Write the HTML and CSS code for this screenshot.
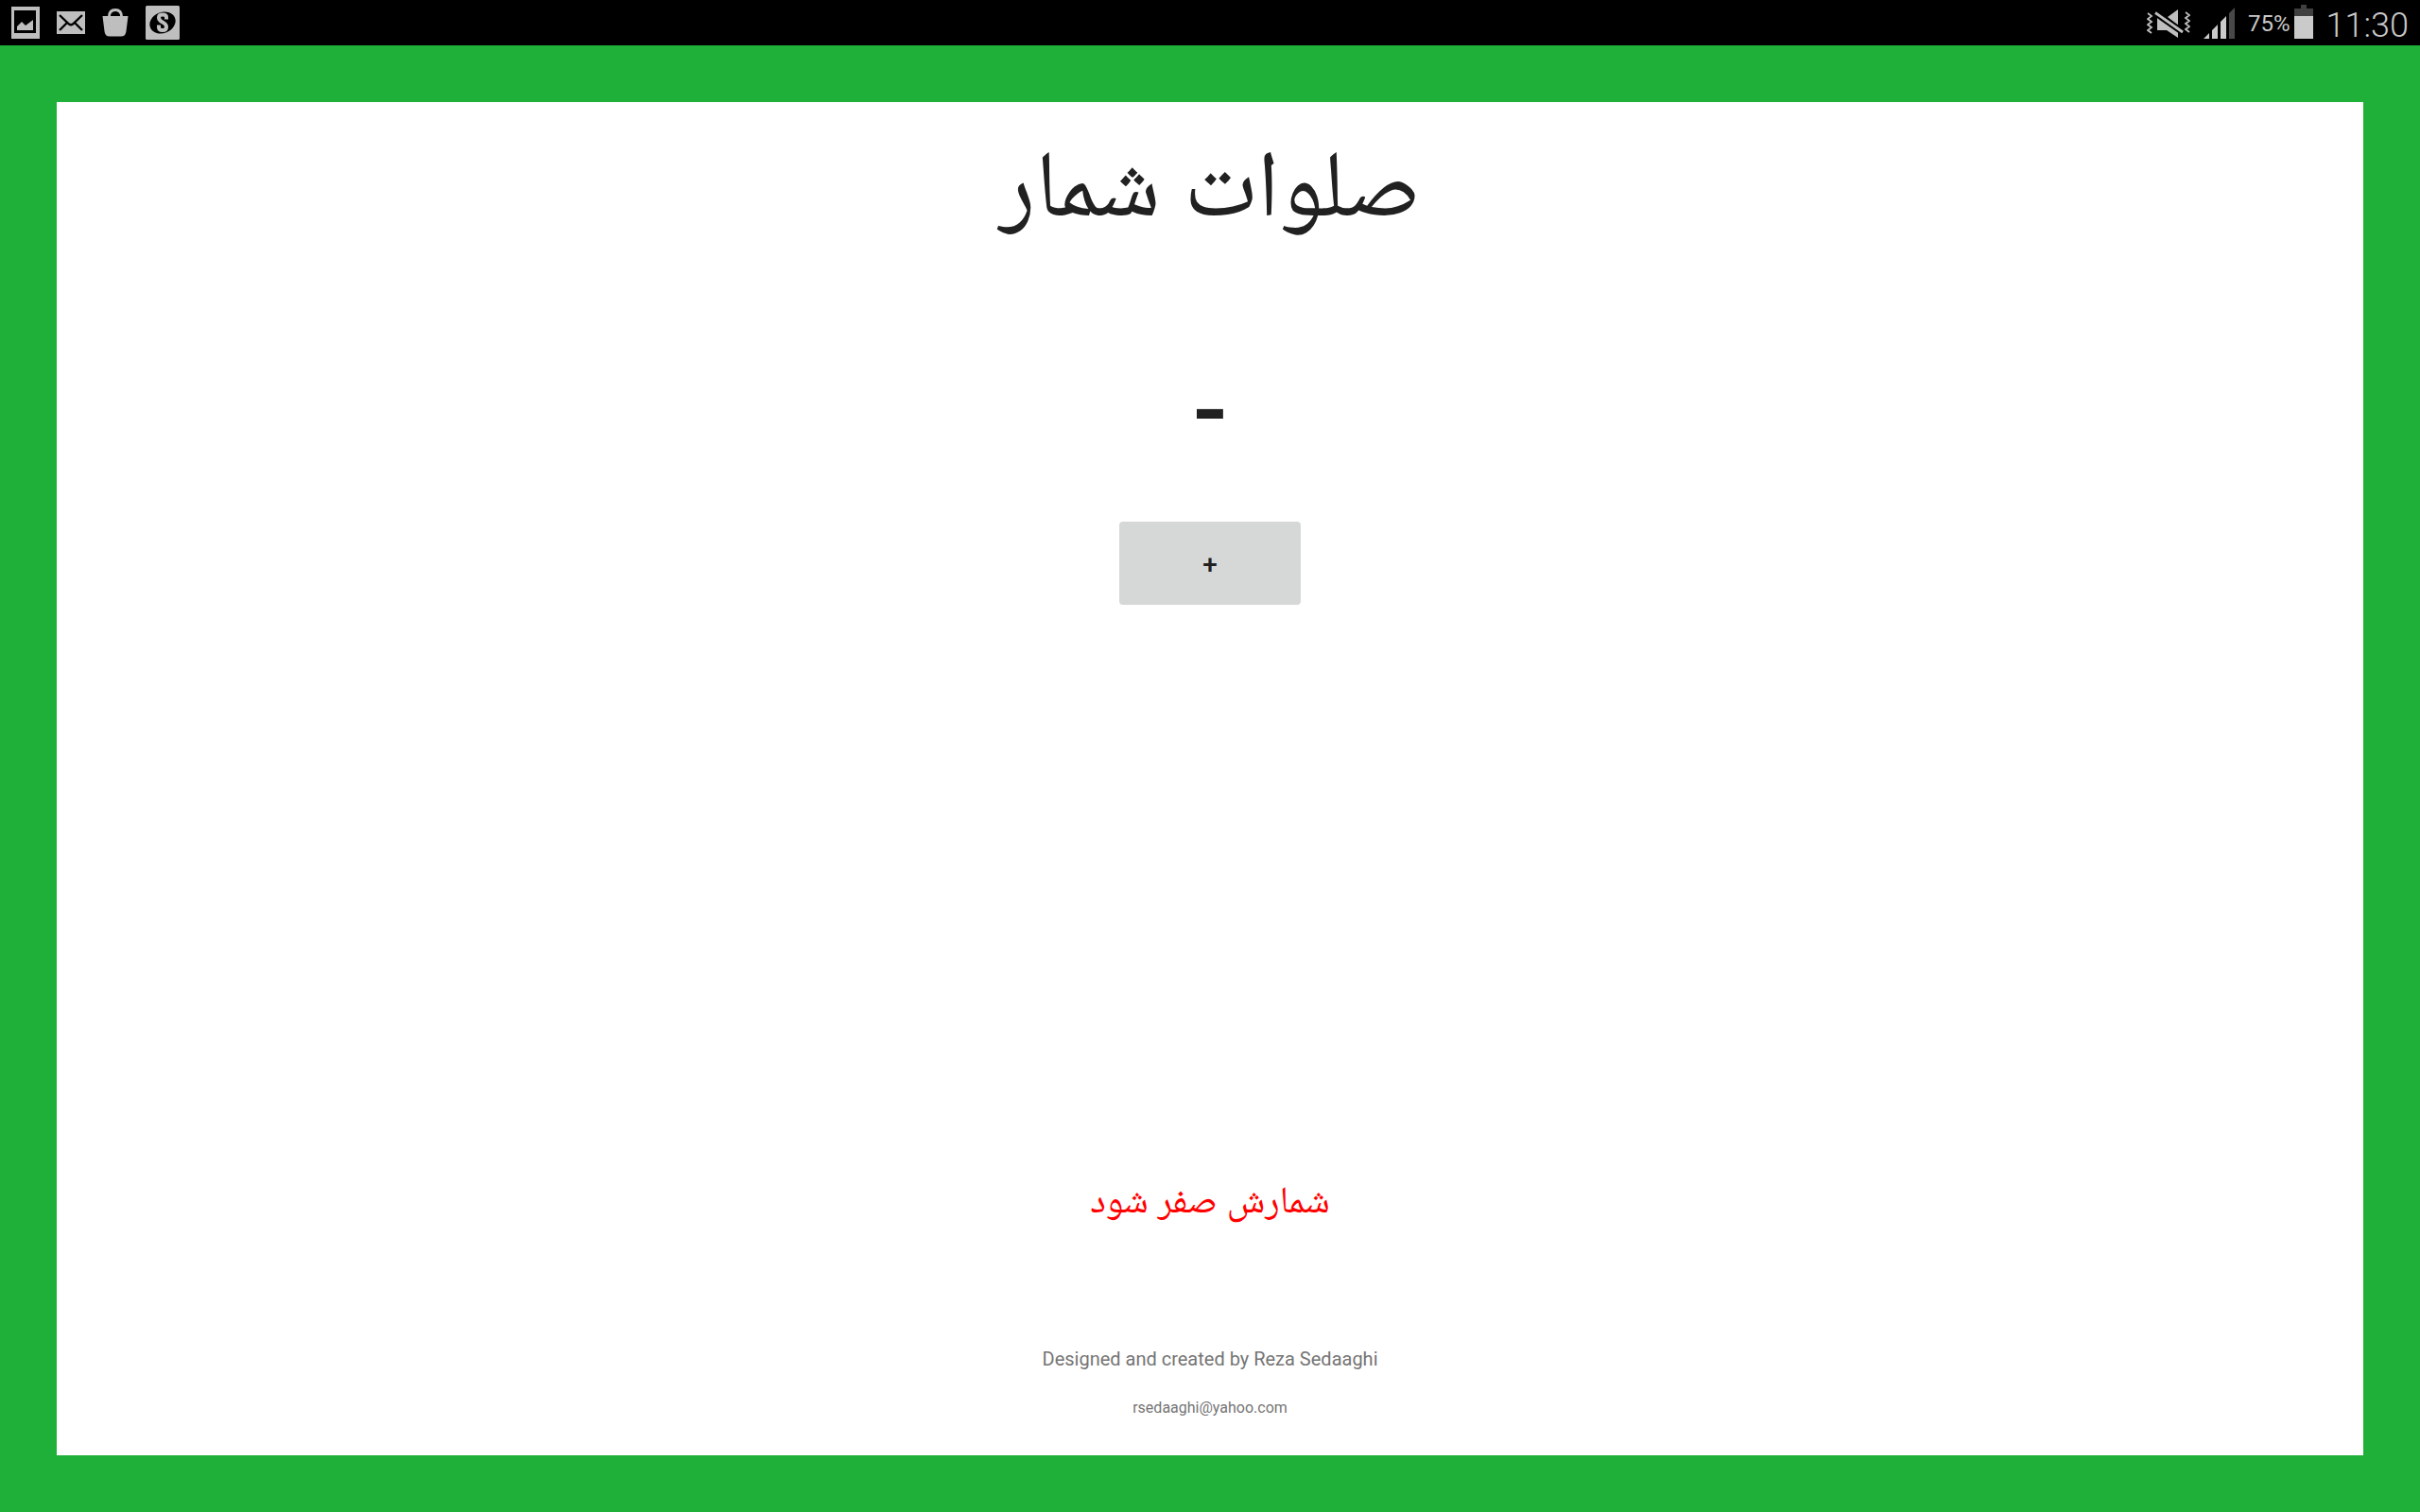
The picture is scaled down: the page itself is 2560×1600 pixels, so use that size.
FILE: index.html
```html
<!DOCTYPE html>
<html lang="fa">
<head>
<meta charset="utf-8">
<meta name="viewport" content="width=device-width, initial-scale=1">
<title>صلوات شمار</title>
<link rel="stylesheet" href="styles.css">
</head>
<body>
<header class="status">
  <div class="notices">
    <svg class="icon" width="30" height="34" viewBox="0 0 30 34" aria-hidden="true"><path fill="#bebebe" fill-rule="evenodd" d="M0 0H30V34H0ZM3 4V28H26V4Z"/><path fill="#bebebe" d="M6 25V21L11 16L15 20L23 14V25Z"/></svg>
    <svg class="icon" width="30" height="24" viewBox="0 0 30 24" aria-hidden="true"><path fill="#bebebe" d="M0 0H30V24H0Z"/><path fill="none" stroke="#000" stroke-width="2.4" d="M3 4L13 13.5Q15 15 17 13.5L27 4M3 20L11 12M27 20L19 12"/></svg>
    <svg class="icon" width="28" height="30" viewBox="0 0 28 30" aria-hidden="true"><path fill="none" stroke="#bebebe" stroke-width="3" d="M7.5 9C7.500 4 10 1.500 14 1.500S20.500 4 20.500 9"/><path fill="#bebebe" d="M.5 8H27.500L25.500 24Q25 29.500 20 29.500H8Q3 29.500 2.500 24Z"/><path fill="#000" d="M9 8C9 5 11 3.500 14 3.500S19 5 19 8Z"/></svg>
    <svg class="icon" width="36" height="36" viewBox="0 0 36 36" aria-hidden="true"><rect width="36" height="36" rx="1.500" fill="#bebebe"/><ellipse cx="18" cy="18" rx="14" ry="11" transform="rotate(-22 18 18)" fill="#000"/><path fill="none" stroke="#bebebe" stroke-width="4" d="M22 14.500V12Q22 9.500 18 9.500T14 12.500Q14 15.500 18 17.500T22 22.500Q22 26 18 26T14 23V20.500"/></svg>
  </div>
  <div class="system">
    <svg class="icon mute" width="46" height="31" viewBox="0 0 46 31" aria-hidden="true"><g fill="none" stroke="#bebebe" stroke-width="1.800"><path d="M1 5L5 8L1 11L5 14L1 17L5 20L1 23L5 26M41 4L45 7L41 10L45 13L41 16L45 19L41 22L45 25"/></g><path fill="#bebebe" d="M11 10H15L33 25V31L21 23H11ZM22 9L33 1V18Z"/><path stroke="#000" stroke-width="7" d="M9 4.500L38 25"/><path stroke="#bebebe" stroke-width="2.800" d="M9 4.500L38 25"/></svg>
    <svg class="icon signal" width="33" height="33" viewBox="0 0 33 33" aria-hidden="true"><path fill="#cacaca" d="M0 33L6 27V33ZM9 33V24L15 18V33ZM18 33V15L24 9V33Z"/><path fill="#484848" d="M27 33V6L33 0V33Z"/></svg>
    <span class="percent">75%</span>
    <svg class="icon battery" width="20" height="36" viewBox="0 0 20 36" aria-hidden="true"><path fill="#404040" d="M7 0H13V4H20V12H0V4H7Z"/><path fill="#cacaca" d="M0 12H20V36H0Z"/></svg>
    <time class="clock">11:30</time>
  </div>
</header>
<main class="frame">
  <section class="panel">
    <h1 class="title" dir="rtl">صلوات شمار</h1>
    <output class="count">-</output>
    <button class="add" type="button" aria-label="افزودن">+</button>
    <button class="reset" type="button" dir="rtl">شمارش صفر شود</button>
    <footer class="credits">
      <p class="author">Designed and created by Reza Sedaaghi</p>
      <a class="email" href="mailto:rsedaaghi@yahoo.com">rsedaaghi@yahoo.com</a>
    </footer>
  </section>
</main>
</body>
</html>
```
FILE: styles.css
```css
* {
  box-sizing: border-box;
}

body {
  margin: 0;
  min-height: 100vh;
  display: flex;
  flex-direction: column;
  background: #1eb038;
  font-family: Roboto, "Noto Naskh Arabic", "Noto Sans Arabic", "DejaVu Sans", sans-serif;
  color: #212121;
}

.status {
  height: 48px;
  padding: 0 12px;
  display: flex;
  justify-content: space-between;
  background: #000;
  color: #c8c8c8;
  font-weight: 300;
}

.notices,
.system {
  display: flex;
  align-items: center;
}

.notices {
  gap: 18px;
}

.icon {
  display: block;
  flex: none;
}

.signal {
  margin: 0 14px;
}

.percent {
  font-size: 24px;
  font-weight: 400;
  line-height: 28px;
  padding-top: 2px;
}

.battery {
  margin: 0 14px 2px 4px;
}

.clock {
  font-size: 36px;
  line-height: 40px;
  padding-top: 6px;
}

.frame {
  flex: 1;
  display: flex;
  padding: 60px;
}

.panel {
  flex: 1;
  display: flex;
  flex-direction: column;
  align-items: center;
  padding: 16px 0 40px;
  background: #fff;
}

.title {
  margin: 0;
  font-size: 100px;
  font-weight: 400;
  line-height: 140px;
}

.count {
  margin-top: 110px;
  font-size: 108px;
  font-weight: 500;
  line-height: 120px;
}

.add {
  width: 192px;
  height: 88px;
  margin-top: 58px;
  padding: 4px 0 0;
  border: 0;
  border-radius: 4px;
  background: #d6d8d7;
  color: inherit;
  font: 500 28px/32px Roboto, sans-serif;
}

.reset {
  margin-top: auto;
  padding: 0;
  border: 0;
  background: none;
  color: #f00;
  font-family: inherit;
  font-size: 40px;
  line-height: 60px;
}

.credits {
  margin-top: 126px;
  display: flex;
  flex-direction: column;
  align-items: center;
  gap: 30px;
  color: #757575;
}

.author {
  margin: 0;
  font-size: 20px;
  line-height: 24px;
}

.email {
  color: inherit;
  font-size: 16px;
  line-height: 20px;
  text-decoration: none;
}
```
